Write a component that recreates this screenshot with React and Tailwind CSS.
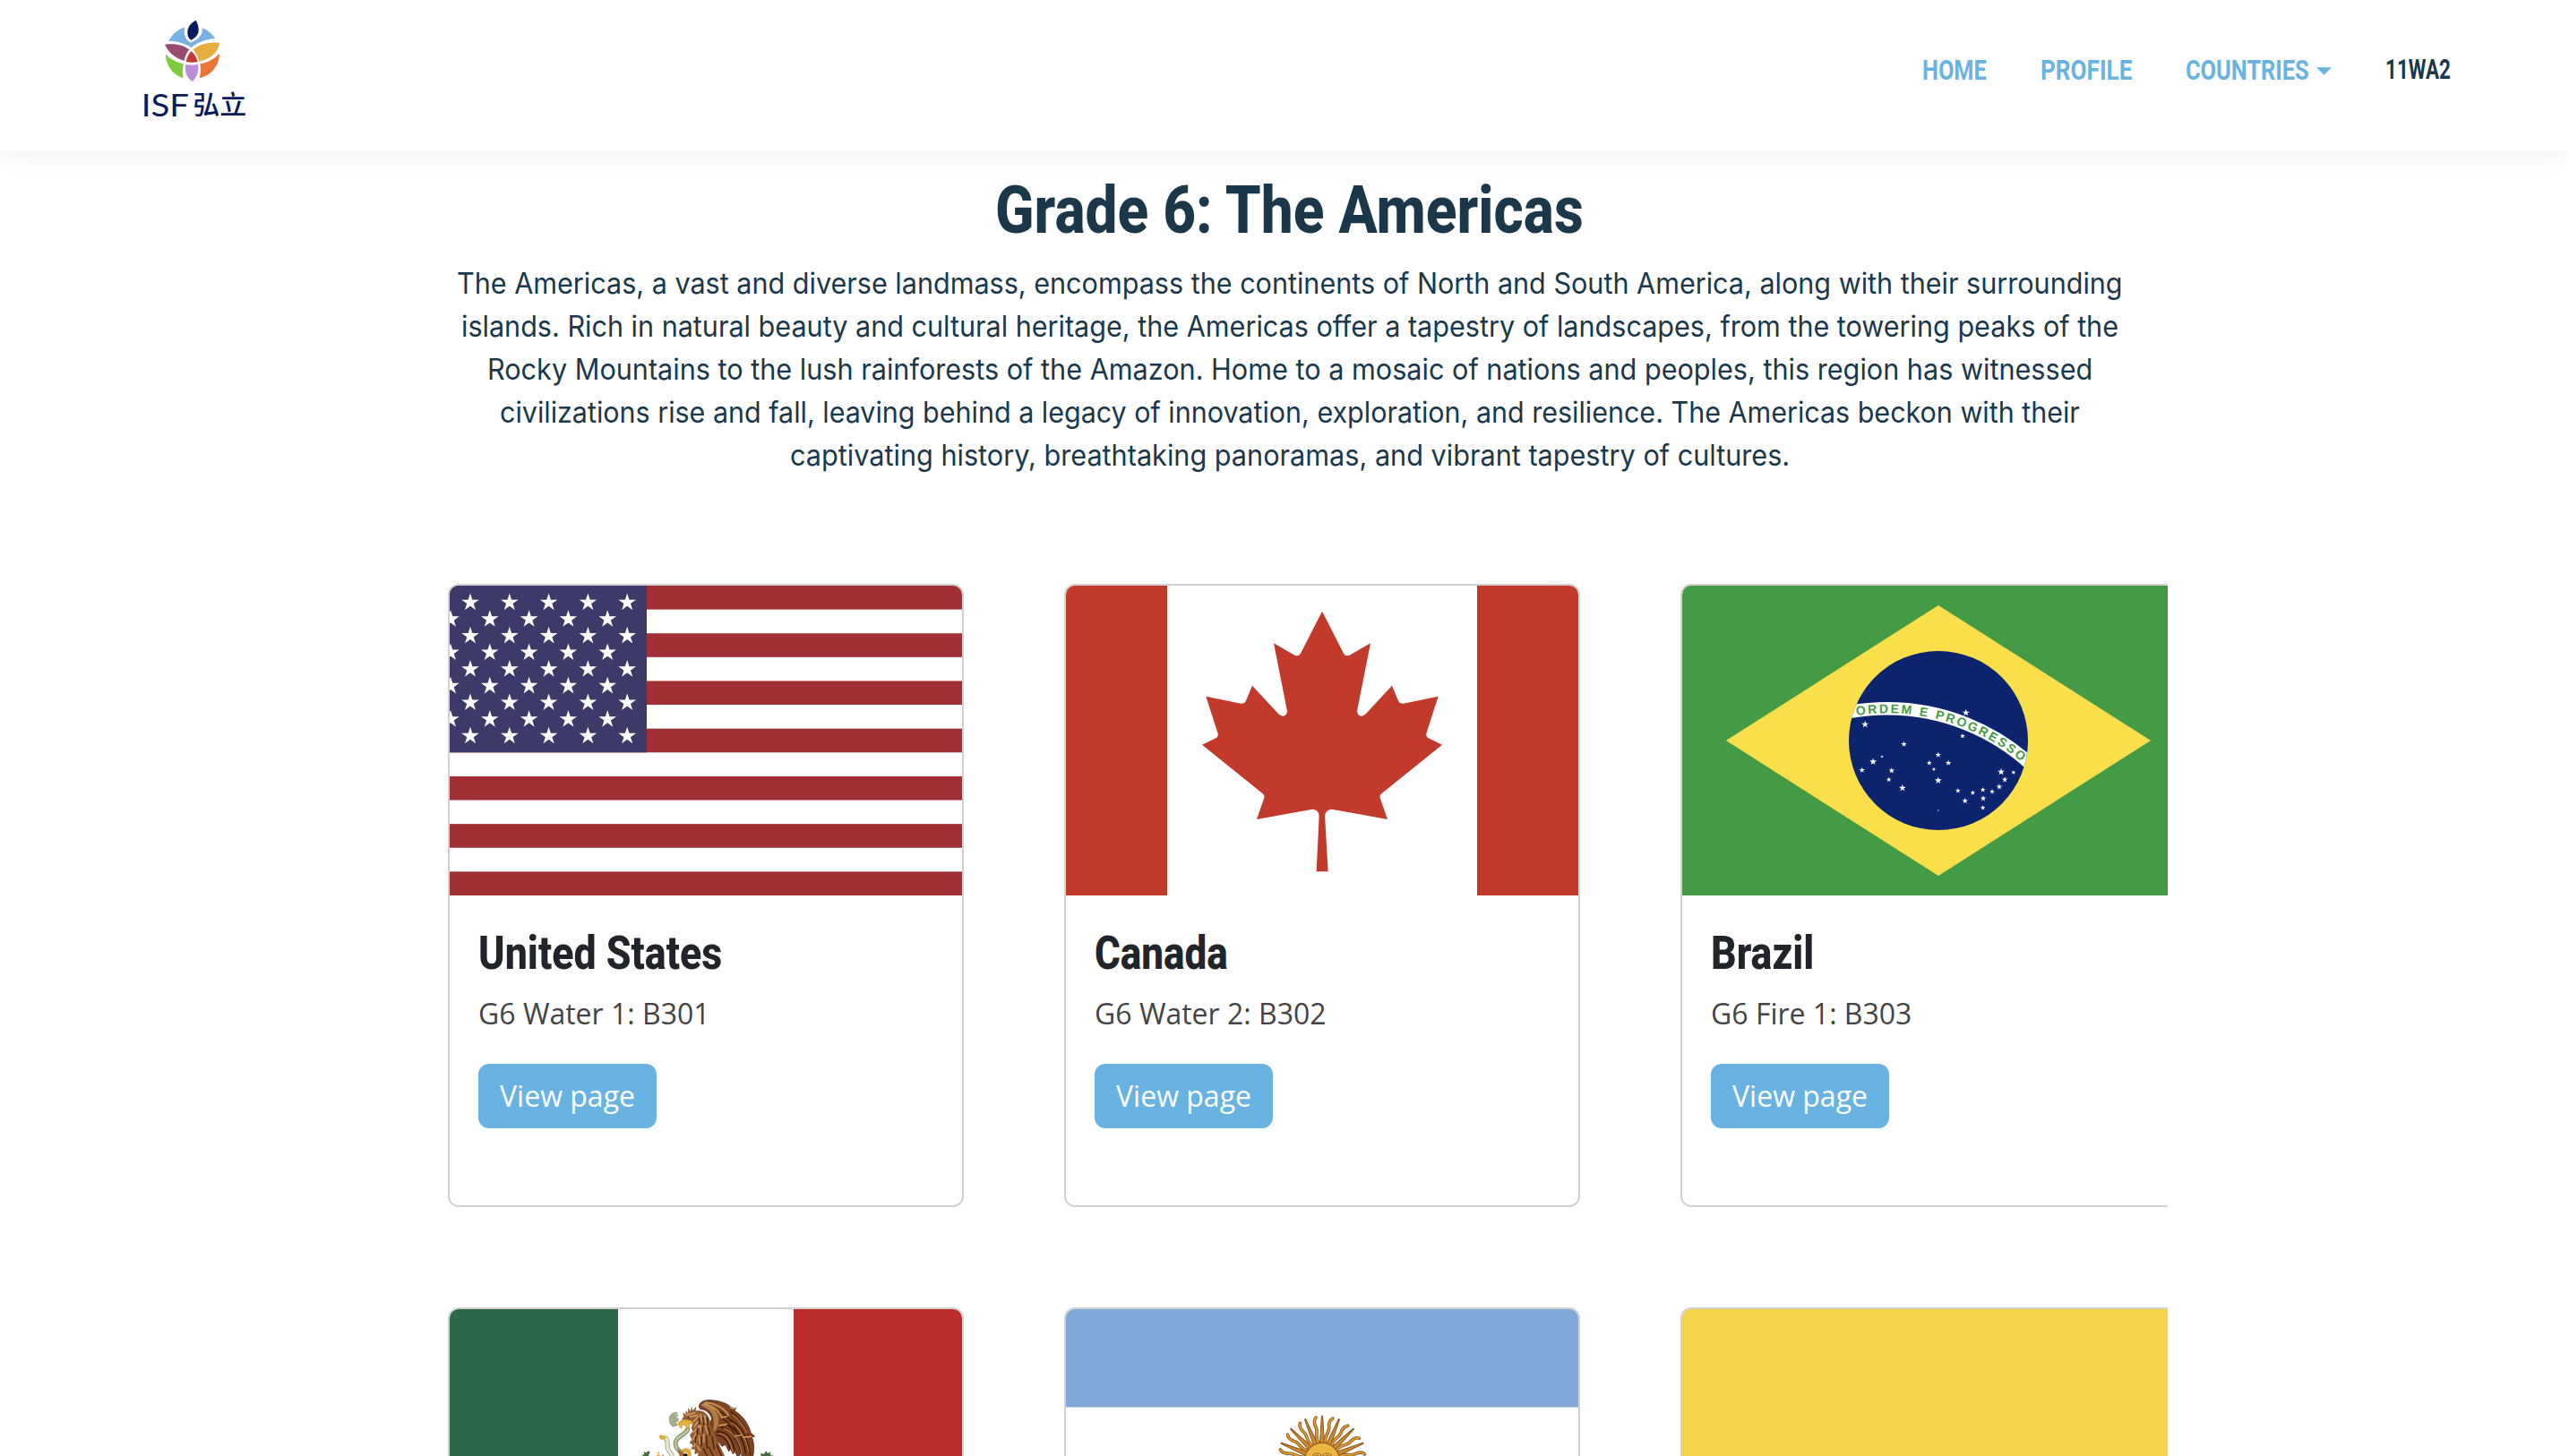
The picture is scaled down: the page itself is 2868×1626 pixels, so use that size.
import { useLayoutEffect, useRef, useState } from "react";

// Single line of text condensed or widened to fill the width of its own box.
function Fit({ className = "", children }) {
  const box = useRef(null);
  const text = useRef(null);
  const [scale, setScale] = useState(1);
  useLayoutEffect(() => {
    setScale(box.current.clientWidth / text.current.offsetWidth);
  }, [children]);
  return (
    <span ref={box} className={`block whitespace-nowrap ${className}`}>
      <span
        ref={text}
        className="inline-block origin-left"
        style={{ transform: `scaleX(${scale})` }}
      >
        {children}
      </span>
    </span>
  );
}

function starPoints(cx, cy, r) {
  return Array.from({ length: 10 }, (_, i) => {
    const a = (Math.PI / 5) * i - Math.PI / 2;
    const d = i % 2 ? r * 0.382 : r;
    return `${(cx + d * Math.cos(a)).toFixed(2)},${(cy + d * Math.sin(a)).toFixed(2)}`;
  }).join(" ");
}

function Star({ x, y, r }) {
  return <polygon points={starPoints(x, y, r)} fill="#fff" />;
}

function Flag({ children }) {
  return (
    <svg viewBox="0 0 572 346" className="block h-[346px] w-[572px] shrink-0">
      {children}
    </svg>
  );
}

function UnitedStates() {
  const stripe = 346 / 13;
  return (
    <Flag>
      <rect width="572" height="346" fill="#fff" />
      {[0, 2, 4, 6, 8, 10, 12].map((i) => (
        <rect key={i} y={i * stripe} width="572" height={stripe} fill="#a13036" />
      ))}
      <rect width="220" height={stripe * 7} fill="#3d3a69" />
      {Array.from({ length: 9 }, (_, row) =>
        Array.from({ length: 5 }, (_, col) => (
          <Star
            key={`${row}-${col}`}
            x={(row % 2 ? 1 : 23) + col * 43.8}
            y={18.9 + row * 18.63}
            r={10.3}
          />
        ))
      )}
    </Flag>
  );
}

function Canada() {
  return (
    <Flag>
      <rect width="572" height="346" fill="#fff" />
      <rect width="113" height="346" fill="#c23a2b" />
      <rect x="459" width="113" height="346" fill="#c23a2b" />
      <path
        transform="translate(110 6) scale(.33333)"
        fill="#c23a2b"
        d="M528 68L600 209Q606 220 620 215L690 175L645 403Q646 418 659 419Q667 419 675 411L762 317L784 370Q788 379 800 377L917 353L877 478Q875 488 884 493L930 515L727 679Q720 684 722 693L747 765L560 731Q540 733 537 752L548 940H509L518 752Q516 733 496 731L309 765L334 693Q336 684 329 679L126 515L172 493Q181 488 179 478L139 353L256 377Q268 379 272 370L294 317L381 411Q389 419 397 419Q410 418 411 403L366 175L436 215Q450 220 456 209Z"
      />
    </Flag>
  );
}

const BRAZIL_STARS = [
  [856, 468, 11], [529, 507, 11], [845, 546, 8], [655, 573, 9], [584, 615, 5],
  [555, 632, 11], [519, 660, 9], [615, 662, 9], [606, 692, 8], [650, 720, 11],
  [766, 609, 9], [737, 636, 8], [799, 636, 9], [752, 657, 6], [766, 695, 11],
  [830, 729, 8], [878, 736, 8], [853, 763, 9], [911, 726, 8], [912, 755, 9],
  [911, 786, 8], [941, 732, 8], [964, 716, 9], [982, 692, 9], [970, 666, 11],
  [1010, 668, 7], [766, 795, 3],
];

function Brazil() {
  return (
    <Flag>
      <rect width="572" height="346" fill="#459a45" />
      <polygon points="49,173 286,22 523,173 286,324" fill="#f9e04b" />
      <clipPath id="globe">
        <circle cx="286" cy="173" r="100" />
      </clipPath>
      <circle cx="286" cy="173" r="100" fill="#0c246e" />
      <circle cx="229" cy="374.5" r="237.2" fill="none" stroke="#fff" strokeWidth="14.6" clipPath="url(#globe)" />
      <path id="motto" d="M194.5 145A232 232 0 0 1 400 217" fill="none" />
      <text fill="#459a45" fontFamily="Liberation Sans, Arial, sans-serif" fontSize="14" fontWeight="700">
        <textPath href="#motto" textLength="197" lengthAdjust="spacing">
          ORDEM E PROGRESSO
        </textPath>
      </text>
      {BRAZIL_STARS.map(([x, y, r]) => (
        <Star key={`${x}-${y}`} x={x / 2.904 + 22} y={y / 3 - 14} r={r / 2.6} />
      ))}
    </Flag>
  );
}

function Mexico() {
  return (
    <Flag>
      <rect width="572" height="346" fill="#fff" />
      <rect width="188" height="346" fill="#2d684b" />
      <rect x="384" width="188" height="346" fill="#bb2c2c" />
      <g transform="translate(198 88) scale(.33333)" strokeLinecap="round" strokeLinejoin="round">
        {/* snake */}
        <path d="M203 138C200 155 172 158 164 178C158 196 168 206 182 216" fill="none" stroke="#77845c" strokeWidth="15" />
        <path d="M203 138C200 155 172 158 164 178C158 196 168 206 182 216" fill="none" stroke="#bcc7a4" strokeWidth="9" strokeDasharray="3 6" />
        <path d="M127 168C141 172 132 190 137 203C140 213 147 216 151 228" fill="none" stroke="#8d9a75" strokeWidth="15" />
        <path d="M127 168C141 172 132 190 137 203C140 213 147 216 151 228" fill="none" stroke="#e3e9d4" strokeWidth="11" strokeDasharray="3 5" />
        <path d="M106 163L112 157L128 161L130 171L114 173Z" fill="#dcae3a" />
        <path d="M142 96L152 85L166 82L171 94L158 96L172 103L170 112L162 113L168 125L152 129L144 118Z" fill="#a3b08c" stroke="#77845c" strokeWidth="2" />
        <path d="M163 84L171 92L165 93Z" fill="#f1d779" />
        <path d="M168 203L188 216L190 228H176Z" fill="#a66a2b" />
        {/* wing */}
        <path d="M241 63C240 47 262 38 283 41C312 43 337 52 350 66L365 68L361 77C390 94 407 122 415 151L428 162L418 165C428 188 426 210 420 240H404L397 225L390 240L380 216L374 240L362 214L355 221L346 204L341 213L330 190L318 196L307 180L285 190L270 142L284 102C276 80 259 70 246 71Z" fill="#7d4220" stroke="#35180b" strokeWidth="2" />
        <path d="M246 58C261 65 281 74 288 95C293 118 289 141 284 153C301 143 309 122 307 102C304 77 283 59 255 52Z" fill="#b07b45" />
        <path d="M262 49C292 51 325 65 340 92M258 54C288 61 310 78 318 101" fill="none" stroke="#c59157" strokeWidth="6" />
        <path d="M312 80C344 97 365 131 372 161M319 102C344 117 360 148 362 172M348 79C374 99 395 128 405 157" fill="none" stroke="#4b2110" strokeWidth="5" />
        <path d="M301 147C333 144 351 163 360 210M315 132C348 136 369 165 380 211M336 125C368 137 390 168 397 218M349 108C383 127 402 162 413 222M296 158C322 157 338 178 345 203" fill="none" stroke="#32160b" strokeWidth="4" />
        <path d="M304 153C329 153 346 176 354 212M324 136C355 145 376 175 385 220M348 117C377 132 397 164 408 214M355 91C377 107 393 133 402 151" fill="none" stroke="#b57d45" strokeWidth="3.5" />
        <path d="M318 99L334 96M309 126L335 121M362 161L384 158M389 165L417 163M347 66L363 70" stroke="#d6a765" strokeWidth="4" />
        {/* head and body */}
        <path d="M184 105L191 96L188 84L198 91L197 77L205 88L205 68L212 80L217 65L219 79L231 64L229 78C250 73 266 82 275 102C282 132 291 148 298 160C306 173 302 183 317 208L332 240H235L240 217L227 221L228 205L215 205L222 191L210 184L218 173L211 158L221 145L216 134L222 117L209 108Z" fill="#935a30" stroke="#5a2f18" strokeWidth="1" />
        <path d="M199 91L227 83M203 99L236 91M223 111L240 97M225 129L242 108M222 148L242 127M219 175L231 151M224 197L234 170M246 89L253 115M260 93L264 119M245 125L249 149M262 127L270 151M241 160L245 187M257 155L257 181M235 194L245 209" fill="none" stroke="#d09a5c" strokeWidth="5" />
        <path d="M240 101L243 121M254 99L257 123M268 100L271 125M236 135L235 156M253 132L252 152M272 132L279 158M231 164L229 182M249 164L249 194M266 163L268 202M285 163L292 204M255 203L269 228M274 198L289 228M300 190L316 228" fill="none" stroke="#4a2412" strokeWidth="4.5" />
        <path d="M170 121C177 105 196 103 219 112L218 120L206 121C213 128 208 138 197 139C202 130 196 123 185 124L182 136Z" fill="#e5af3c" stroke="#a97823" strokeWidth="1.5" />
        <circle cx="205" cy="99" r="3" fill="#24110b" />
        {/* talon and cactus tips */}
        <path d="M184 207Q193 199 207 204Q218 209 215 228H201L203 218L190 216Z" fill="#dfac38" />
        <path d="M188 228L191 219L202 221V228Z" fill="#171310" />
        <path d="M48 228L58 221L55 214L67 217L68 211L77 214L72 228Z" fill="#466d3d" />
        <path d="M447 228L450 218L458 222L466 211L471 219L482 214L479 223L491 228Z" fill="#466d3d" />
        <path d="M101 216L111 215L105 222ZM97 228L105 223L114 228Z" fill="#d79b32" />
        <path d="M116 225L123 223L121 228Z" fill="#a83e3c" />
      </g>
    </Flag>
  );
}

function Argentina() {
  const rays = Array.from({ length: 32 }, (_, i) => i);
  return (
    <Flag>
      <rect width="572" height="346" fill="#fff" />
      <rect width="572" height="109.5" fill="#80a9da" />
      <rect y="236.5" width="572" height="109.5" fill="#80a9da" />
      <g transform="translate(286 168.7)">
        {rays.map((i) => (
          <g key={i} transform={`rotate(${i * 11.25})`}>
            {i % 2 ? (
              <>
                <path d="M0 -19C-4 -27 3 -32 0 -39C-1 -44 0 -46 2.5 -48" fill="none" stroke="#8d5420" strokeWidth="3.6" strokeLinecap="round" />
                <path d="M0 -19C-4 -27 3 -32 0 -39C-1 -44 0 -46 2.5 -48" fill="none" stroke="#dfa032" strokeWidth="1.8" strokeLinecap="round" />
              </>
            ) : (
              <path d="M-2.5 -19L-.6 -49.5H.6L2.5 -19Z" fill="#cb8b2d" stroke="#8d5420" strokeWidth="1" />
            )}
          </g>
        ))}
        <circle r="19.4" fill="#ebb540" stroke="#9b6020" strokeWidth="1.2" />
        <path d="M-11 -5Q-6 -10 -1 -6V2M11 -5Q6 -10 1 -6V2M-9 -4Q-6 -7 -3 -4M9 -4Q6 -7 3 -4" fill="none" stroke="#9b6020" strokeWidth="1" />
      </g>
    </Flag>
  );
}

function Colombia() {
  return (
    <Flag>
      <rect width="572" height="173" fill="#f4d34b" />
      <rect y="173" width="572" height="86.5" fill="#123a8c" />
      <rect y="259.5" width="572" height="86.5" fill="#bf2a36" />
    </Flag>
  );
}

function Logo() {
  return (
    <svg viewBox="0 0 480 504" className="h-[168px] w-[160px] shrink-0">
      <path d="M145 138C156 116 174 99 199 91C194 115 201 134 219 143C240 135 260 119 258 94C276 101 291 113 300 129C267 132 241 141 221 160C202 146 176 138 145 138Z" fill="#78b2e0" />
      <path d="M236 68C219 77 207 91 208 111C208 122 212 130 221 134C237 126 246 113 245 99C245 87 241 77 236 68Z" fill="#071a5b" />
      <path d="M132 149C164 145 191 149 214 166C205 177 200 188 197 203C165 195 144 174 132 149Z" fill="#994a70" />
      <path d="M316 144C283 139 251 147 227 166C237 177 243 190 246 206C281 200 309 179 316 144Z" fill="#e5ac3e" />
      <path d="M221 171C211 181 205 194 203 207C216 210 228 210 242 208C239 193 232 181 221 171Z" fill="#c43a3a" />
      <path d="M135 181C149 198 170 209 195 214C190 231 191 247 194 262C159 250 135 221 135 181Z" fill="#80ca3e" />
      <path d="M315 180C298 197 276 210 250 214C254 231 252 247 248 262C286 253 315 221 315 180Z" fill="#ed7439" />
      <path d="M202 216Q222 219 243 216C247 240 239 260 224 273C205 259 198 240 202 216Z" fill="#bd8dd7" />
      <text x="53" y="390" textLength="160" lengthAdjust="spacingAndGlyphs" fontFamily="Lato, sans-serif" fontWeight="400" fontSize="102" fill="#0b1c5c">
        ISF
      </text>
      <text x="226" y="385" textLength="180" lengthAdjust="spacingAndGlyphs" fontFamily="'Noto Sans CJK SC', sans-serif" fontWeight="500" fontSize="87" fill="#0b1c5c">
        弘立
      </text>
    </svg>
  );
}

function Header() {
  return (
    <header className="relative flex h-[168px] items-start justify-between bg-white pr-[132px] pl-[140px] font-['Roboto',sans-serif] text-[32px] leading-[48px] font-bold text-[#68b3e2] shadow-[0_4px_30px_rgba(0,0,0,0.06)]">
      <Logo />
      <nav className="flex pt-[54px]">
        <Fit className="mr-[60px] w-[72px]">HOME</Fit>
        <Fit className="mr-[60px] w-[102px]">PROFILE</Fit>
        <Fit className="mr-[8px] w-[138px]">COUNTRIES</Fit>
        <svg viewBox="0 0 18 9" className="mt-[21px] mr-[60px] h-[9px] w-[17px]">
          <path d="M0 0H18L9 9Z" fill="#68b3e2" />
        </svg>
        <Fit className="-mt-px w-[73px] text-[#1b384b]">11WA2</Fit>
      </nav>
    </header>
  );
}

const COUNTRIES = [
  { name: "United States", room: "G6 Water 1: B301", Art: UnitedStates, nameWidth: "w-[272px]", roomWidth: "w-[259px]" },
  { name: "Canada", room: "G6 Water 2: B302", Art: Canada, nameWidth: "w-[149px]", roomWidth: "w-[259px]" },
  { name: "Brazil", room: "G6 Fire 1: B303", Art: Brazil, nameWidth: "w-[115px]", roomWidth: "w-[224px]" },
];

// Countries whose cards start at the lower edge of the viewport: only the flag shows.
const MORE_COUNTRIES = [
  { id: "mexico", Art: Mexico },
  { id: "argentina", Art: Argentina },
  { id: "colombia", Art: Colombia },
];

function Card({ name, room, Art, nameWidth, roomWidth }) {
  return (
    <article className="h-[696px] w-[576px] overflow-hidden rounded-xl border-2 border-[#d2d2d2] bg-white">
      <Art />
      {name && (
        <div className="px-8 pt-[34px] font-['Open_Sans',sans-serif] text-[32px] leading-[48px]">
          <h2 className="font-['Roboto',sans-serif] text-[52px] leading-[62px] font-extrabold text-[#212529]">
            <Fit className={nameWidth}>{name}</Fit>
          </h2>
          <p className="mt-3 text-[#444444]">
            <Fit className={roomWidth}>{room}</Fit>
          </p>
          <button className="mt-8 flex h-[72px] w-[199px] items-center justify-center rounded-xl bg-[#68b3e2] text-white">
            <Fit className="w-[151px]">View page</Fit>
          </button>
        </div>
      )}
    </article>
  );
}

export default function App() {
  return (
    <div className="h-[1626px] w-[2868px] overflow-hidden bg-white">
      <Header />
      <main className="ml-[500px] w-[1920px]">
        <section className="flex w-[1879px] flex-col items-center pt-[21px] text-[#1b384b]">
          <h1 className="font-['Roboto',sans-serif] text-[74px] leading-[92px] font-extrabold">
            <Fit className="w-[657px]">Grade 6: The Americas</Fit>
          </h1>
          <div className="mt-3 flex flex-col items-center font-['Inter',sans-serif] text-[32px] leading-[48px]">
            <Fit className="w-[1860px]">The Americas, a vast and diverse landmass, encompass the continents of North and South America, along with their surrounding</Fit>
            <Fit className="w-[1850px]">islands. Rich in natural beauty and cultural heritage, the Americas offer a tapestry of landscapes, from the towering peaks of the</Fit>
            <Fit className="w-[1792px]">Rocky Mountains to the lush rainforests of the Amazon. Home to a mosaic of nations and peoples, this region has witnessed</Fit>
            <Fit className="w-[1764px]">civilizations rise and fall, leaving behind a legacy of innovation, exploration, and resilience. The Americas beckon with their</Fit>
            <Fit className="w-[1116px]">captivating history, breathtaking panoramas, and vibrant tapestry of cultures.</Fit>
          </div>
        </section>
        <section className="mt-[119px] h-[974px] overflow-hidden">
          <div className="grid w-[1952px] grid-cols-[576px_576px_576px] gap-[112px]">
            {COUNTRIES.map((country) => (
              <Card key={country.name} {...country} />
            ))}
            {MORE_COUNTRIES.map((country) => (
              <Card key={country.id} Art={country.Art} />
            ))}
          </div>
        </section>
      </main>
    </div>
  );
}
